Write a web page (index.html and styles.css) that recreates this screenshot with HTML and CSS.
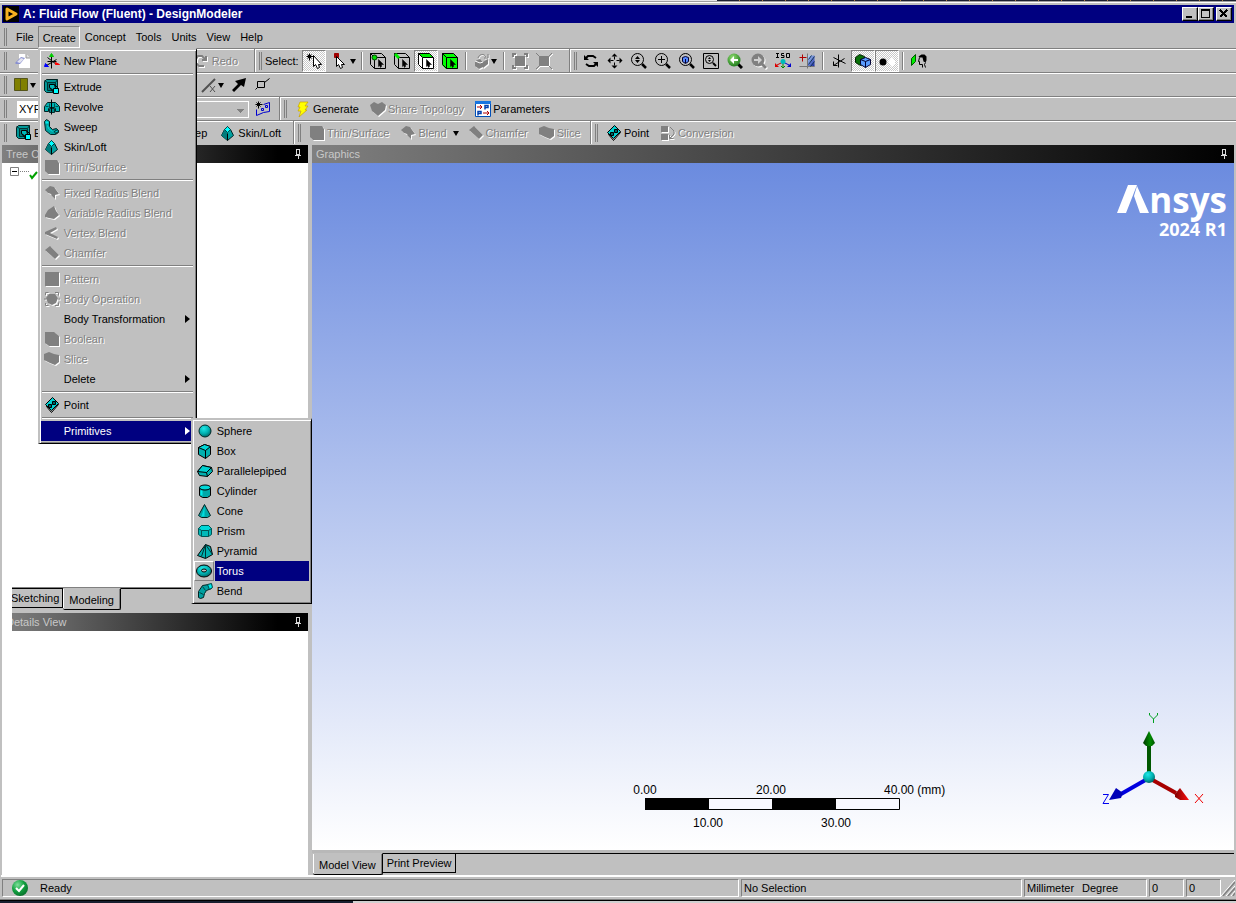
FILE: index.html
```html
<!DOCTYPE html>
<html lang="en">
<head>
<meta charset="utf-8">
<title>A: Fluid Flow (Fluent) - DesignModeler</title>
<link rel="stylesheet" href="styles.css">
</head>
<body>
<svg class="defs" aria-hidden="true">
  <defs>
    <linearGradient id="sky" x1="0" y1="0" x2="1" y2="1"><stop offset="0" stop-color="#bfe0ff"/><stop offset="1" stop-color="#1020a0"/></linearGradient>
    <radialGradient id="ball" cx=".4" cy=".3" r=".7"><stop offset="0" stop-color="#20e8e8"/><stop offset=".6" stop-color="#00b0b0"/><stop offset="1" stop-color="#006868"/></radialGradient>
    <radialGradient id="ok" cx=".35" cy=".3" r=".8"><stop offset="0" stop-color="#7fe09a"/><stop offset=".5" stop-color="#12a040"/><stop offset="1" stop-color="#066a28"/></radialGradient>
    <radialGradient id="leaf" cx=".4" cy=".3" r=".8"><stop offset="0" stop-color="#8fdc70"/><stop offset="1" stop-color="#107010"/></radialGradient>
  </defs>
  <symbol id="plane" viewBox="-.5 -.5 16 16"><path d="M7 2v13M3 4l9 7M2 12l10-6M3 8h9" stroke="#000" fill="none"/><path d="M7 0L5 3h4z" fill="#0c0" stroke="#0c0"/><path d="M0 13l1-3 3 3z" fill="#00f" stroke="#00f"/><path d="M15 11l-4-2v2z" fill="#f00" stroke="#f00"/></symbol>
  <symbol id="extrude" viewBox="-.5 -.5 16 16"><path d="M0 2l2-2h11v10l-2 3H2l-2-2z" fill="#009898" stroke="#022"/><path d="M3 3h8v8H3zM3 3L0 1M11 3l2-3" fill="#007878" stroke="#033"/><path d="M5 5h5l1 4-2 2-4-3z" fill="#00b8b8" stroke="#000"/><path d="M5 8l5 6M10 5l4 4" stroke="#000"/><path d="M9 9h5v5H9z" fill="#0ff" stroke="#000"/></symbol>
  <symbol id="revolve" viewBox="-.5 -.5 16 16"><path d="M0 7l3-4h8l4 4v5h-4V9l-1-1H5L4 9v3H0z" fill="#00b0b0" stroke="#022"/><path d="M1 7h3M11 7h3M5 4v4M10 4v4" stroke="#055" fill="none"/><path d="M5 9h5v4H5z" fill="#088" stroke="#033"/><path d="M7 0v15" stroke="#000"/></symbol>
  <symbol id="sweep" viewBox="-.5 -.5 16 16"><path d="M0 2l2-2 3 2v5l3 3 4-1 2 2v2l-3 2H6l-5-4z" fill="#00a0a0" stroke="#022"/><path d="M1 2h3v2H1z" fill="#0ee"/><path d="M10 12l3-2 1 2-3 2z" fill="#0cc" stroke="#022"/><path d="M3 6l1 3 4 3" stroke="#0dd" fill="none"/></symbol>
  <symbol id="loft" viewBox="-.5 -.5 16 16"><path d="M7 1l3 3 3 6-6 5-6-5 3-6z" fill="#00a0a0" stroke="#022"/><path d="M1 10l3-6 3 4v7z" fill="#007c7c"/><path d="M7 1l3 3-3 3-3-3z" fill="#0ff" stroke="#044"/><path d="M7 8v7" stroke="#000"/></symbol>
  <symbol id="g-surface" viewBox="0 0 16 16"><path d="M1 1h12l2 3v11H4l-3-3z"/></symbol>
  <symbol id="g-blend" viewBox="0 0 16 16"><path d="M1 5l5-4 4 1 5 7-4 1v4l-3-3-1-2-3-1z"/></symbol>
  <symbol id="g-var" viewBox="0 0 16 16"><path d="M1 10l3-5 6-4 2 5 3 4-5 4-5-1-4-1z"/></symbol>
  <symbol id="g-vertex" viewBox="0 0 16 16"><path d="M1 7l11-5 1 2-7 4 8 4-1 2L1 9z"/></symbol>
  <symbol id="g-chamfer" viewBox="0 0 16 16"><path d="M1 5l5-4 9 9-4 4z"/></symbol>
  <symbol id="g-pattern" viewBox="0 0 16 16"><path d="M1 1h14v14H1z"/></symbol>
  <symbol id="g-body" viewBox="0 0 16 16"><path d="M5 3h6l3 4-2 5-4 2-4-2-2-5z"/><path d="M1.500 4V1.500h3M11 1.500h3.500v3M1.500 12v2.500h3M11 14.500h3.500v-3M0 8h2M14 8h2" fill="none" stroke="#808080"/></symbol>
  <symbol id="g-bool" viewBox="0 0 16 16"><path d="M1 1h9l5 4v10H5l-4-3z"/></symbol>
  <symbol id="g-slice" viewBox="0 0 16 16"><path d="M0 3l5-2 5 2 5 1v7l-4 3-5-2-6-3z"/></symbol>
  <symbol id="g-share" viewBox="0 0 16 16"><path d="M0 4l4-3 4 2 4-2 4 3-1 5-7 6-6-5z"/></symbol>
  <symbol id="g-conv" viewBox="0 0 16 16"><path d="M1 1h7v6H1zM1 9h7v6H1z"/><path d="M10 2l4 4v3l-4 4M9.500 10v3.500h4" stroke="#808080" fill="none"/></symbol>
  <symbol id="point" viewBox="-.5 -.5 16 16"><path d="M2 9l7-7 5 5-7 8z" fill="#c0c0c0" stroke="#000"/><path d="M1 7l7-7 6 6-7 7z" fill="#00d0d0" stroke="#000"/><path d="M4 7h3v3H4zM8 4h3v3H8z" fill="#066" stroke="#000"/></symbol>
  <symbol id="sphere" viewBox="0 0 16 16"><circle cx="8" cy="8" r="6" fill="url(#ball)" stroke="#002828"/></symbol>
  <symbol id="box" viewBox="-.5 -.5 16 16"><path d="M1 4l6-3 6 2v8l-5 4-7-4z" fill="#00b0b0" stroke="#000"/><path d="M1 4l6-3 6 2-5 4z" fill="#00d8d8" stroke="#000"/><path d="M8 7v8" stroke="#000"/></symbol>
  <symbol id="para" viewBox="-.5 -.5 16 16"><path d="M0 8l5-6 9 2 1 4-5 5-8-1z" fill="#00b0b0" stroke="#000"/><path d="M0 8l5-6 9 2-5 5z" fill="#00d0d0" stroke="#000"/><path d="M9 9l1 4" stroke="#000"/></symbol>
  <symbol id="cyl" viewBox="-.5 -.5 16 16"><path d="M2 4v8l3 2h5l3-2V4z" fill="#00a8a8" stroke="#000"/><path d="M4 7v5" stroke="#0ee" stroke-width="2"/><ellipse cx="7.500" cy="4" rx="5.500" ry="2.500" fill="#00d8d8" stroke="#000"/></symbol>
  <symbol id="cone" viewBox="-.5 -.5 16 16"><path d="M7 1l6 11-3 2H4l-3-2z" fill="#00a8a8" stroke="#022"/><path d="M7 3L4 13h3z" fill="#0dd"/></symbol>
  <symbol id="prism" viewBox="-.5 -.5 16 16"><path d="M1 5l3-3h7l3 3v6l-3 2H4l-3-2z" fill="#00b8b8" stroke="#055"/><path d="M1 5l3-3h7l3 3-3 2H4z" fill="#00d8d8" stroke="#055"/><path d="M4 7v6M11 7v6" stroke="#055"/></symbol>
  <symbol id="pyr" viewBox="-.5 -.5 16 16"><path d="M8 1l5 2 2 8-7 4-8-3z" fill="#00b0b0" stroke="#000"/><path d="M8 1v14M8 1l7 10M8 1L4 13" stroke="#033" fill="none"/></symbol>
  <symbol id="torus" viewBox="0 0 16 16"><ellipse cx="8" cy="8" rx="7.500" ry="6" fill="url(#ball)" stroke="#000"/><ellipse cx="8" cy="7.500" rx="2.500" ry="1.500" fill="#c0c0c0" stroke="#000"/></symbol>
  <symbol id="bend" viewBox="-.5 -.5 16 16"><path d="M1 14l0-6 4-6 6-1 3 0v4l-5 2-2 3-1 4-3 1z" fill="#00a0a0" stroke="#022"/><path d="M10 1l4-1 1 4-3 2z" fill="#0ee" stroke="#044"/><path d="M5 3l3 4M2 9l4 2" stroke="#044"/></symbol>
  <symbol id="sheet" viewBox="0 0 16 16"><path d="M4 1h7l4 4v10H4z" fill="#fff"/><path d="M11 1v4h4" fill="#ddd" stroke="#999"/><path d="M0 10l6-6 4 1-5 6H1z" fill="#8890d0"/><path d="M2 9l4-4 3 1-4 4z" fill="#e4e4f0"/></symbol>
  <symbol id="redo" viewBox="0 0 16 16"><path d="M12 3v4H8M12 7L8 3H4L2 6v4l3 3h5" fill="none" stroke="#808080" stroke-width="2"/></symbol>
  <symbol id="selnew" viewBox="-.5 -.5 16 16"><path d="M3 0v7M0 3h7M1 1l4 4M5 1L1 5" stroke="#000"/><path d="M7 2v11l2-2 2 4 2-1-1-3h3z" fill="#fff" stroke="#000"/></symbol>
  <symbol id="selmode" viewBox="-.5 -.5 16 16"><path d="M0 0h4v4H0z" fill="#a00000" stroke="#a00000"/><path d="M2 3v10l2-2 2 4 2-1-1-3h3z" fill="#fff" stroke="#000"/></symbol>
  <symbol id="cube" viewBox="-.5 -.5 16 16"><path d="M0 0h11l4 4v11H4l-4-4zM4 4h11M4 4v11M4 4L0 0" fill="none" stroke="#000"/><path d="M8 6v7l1-1 1 2 1-1v-2h2z" fill="#000" stroke="#000" stroke-width=".5"/></symbol>
  <symbol id="c-pt" viewBox="0 0 16 16"><use href="#cube"/><circle cx="4.500" cy="4.500" r="2.500" fill="#0d0" stroke="#040"/></symbol>
  <symbol id="c-edge" viewBox="0 0 16 16"><use href="#cube"/><path d="M1 1l4 4" stroke="#0e0" stroke-width="3"/></symbol>
  <symbol id="c-face" viewBox="0 0 16 16"><path d="M0 0h11l5 5v11H4l-4-4z" fill="#fff"/><path d="M0 0h11l4 4H4z" fill="#0e0"/><use href="#cube"/></symbol>
  <symbol id="c-body" viewBox="0 0 16 16"><path d="M0 0h11l5 5v11H4l-4-4z" fill="#0f0"/><use href="#cube"/></symbol>
  <symbol id="g-ext" viewBox="0 0 16 16"><path d="M1 8l5-2 3 3v5l-4 2-4-3zM9 9l5-3v5l-5 4z"/><path d="M4 5c1-4 6-5 8-1M14 1v4h-4" stroke="#808080" fill="none"/><path d="M1 8l5 2 3-1" stroke="#fff" fill="none"/></symbol>
  <symbol id="g-exp" viewBox="0 0 16 16"><path d="M3 3h10v10H3z"/><path d="M1 4V1h3M12 1h3v3M1 12v3h3M12 15h3v-3" fill="none" stroke="#808080" stroke-width="2"/></symbol>
  <symbol id="g-shr" viewBox="0 0 16 16"><path d="M3 3h10v10H3z"/><path d="M0 0l4 4M16 0l-4 4M0 16l4-4M16 16l-4-4" stroke="#808080"/></symbol>
  <symbol id="rotate" viewBox="0 0 16 16"><path d="M3 5l2-2h5l3 2M13 11l-2 2H6l-3-2" stroke="#000" stroke-width="2" fill="none"/><path d="M1 2v5h5zM15 14V9h-5z"/></symbol>
  <symbol id="pan" viewBox="-.5 -.5 16 16"><path d="M7 0L4 3h6zM7 15l-3-3h6zM0 7l3-3v6zM15 7l-3-3v6z"/><path d="M7 3v3M7 9v3M3 7h3M9 7h3" stroke="#000"/></symbol>
  <symbol id="lens" viewBox="0 0 16 16"><circle cx="6.500" cy="6.500" r="6" fill="none" stroke="#000"/><path d="M11 11l4 4" stroke="#000" stroke-width="2.500"/></symbol>
  <symbol id="z-ud" viewBox="0 0 16 16"><use href="#lens"/><path d="M6.500 3L4 6h5zM6.500 10L4 7h5z"/></symbol>
  <symbol id="z-in" viewBox="0 0 16 16"><use href="#lens"/><path d="M6.500 3v7M3 6.500h7" stroke="#000"/></symbol>
  <symbol id="z-fit" viewBox="0 0 16 16"><use href="#lens"/><path d="M3.500 4.500l3-1 3 1v4l-3 2-3-2z" fill="#58f" stroke="#003"/><path d="M6.500 6v4" stroke="#003" fill="none"/></symbol>
  <symbol id="z-box" viewBox="0 0 16 16"><path d="M.5.5h15v15H.5z" fill="none" stroke="#000"/><circle cx="6.500" cy="6.500" r="4" fill="none" stroke="#000"/><path d="M10 10l3 3" stroke="#000" stroke-width="2"/><path d="M6.500 4L5 6h3zM6.500 9L5 7h3z"/></symbol>
  <symbol id="z-prev" viewBox="0 0 16 16"><path d="M11 11l4 4" stroke="#000" stroke-width="3"/><circle cx="7" cy="7" r="6.500" fill="url(#leaf)"/><path d="M3 7l4-4v3h4v2H7v3z" fill="#fff"/></symbol>
  <symbol id="z-next" viewBox="0 0 16 16"><path d="M11 11l4 4" stroke="#808080" stroke-width="3"/><circle cx="7" cy="7" r="6.500" fill="#808080"/><path d="M11 7L7 3v3H3v2h4v3z" fill="#d0d0d0"/></symbol>
  <symbol id="iso" viewBox="0 0 16 16"><path d="M1 .5h3M2.500.5v4M1 4.500h3M9 .5H6.500v2H9v2H6M11.500.5h3v4h-3z" stroke="#000" fill="none"/><path d="M8 10v5M6 13l2 2 2-2" stroke="#080" fill="none"/><path d="M8 9l-6 3" stroke="#c00"/><path d="M0 10v4h4z" fill="#d00"/><path d="M8 9l6 3" stroke="#00c"/><path d="M16 10v4h-4z" fill="#00c"/><circle cx="8" cy="8.500" r="2.500" fill="#0bb"/></symbol>
  <symbol id="look" viewBox="-.5 -.5 16 16"><path d="M8 2h7v11H8z" fill="url(#sky)"/><path d="M8 0v15M0 13h15" stroke="#777"/><path d="M3 1v7M0 4h7" stroke="#b00000"/><path d="M9 6l3-4M9 11l6-8M11 13l4-5" stroke="#135"/></symbol>
  <symbol id="axes" viewBox="-.5 -.5 16 16"><path d="M7 1v13M2 4l12 6M2 12l11-7M2 8v4h4" stroke="#000" fill="none"/></symbol>
  <symbol id="models" viewBox="-.5 -.5 16 16"><path d="M0 4l4-3 5 2v7l-4 2-5-3z" fill="#087008" stroke="#020"/><path d="M5 6l5-2 5 2v5l-5 3-5-3z" fill="#5a9cff" stroke="#003"/><path d="M5 6l5 2 5-2M10 8v6" stroke="#003" fill="none"/></symbol>
  <symbol id="dots" viewBox="0 0 16 16"><circle cx="4" cy="9" r="3.500"/><path d="M13 4l4 5-4 5-4-5z" fill="#fff"/></symbol>
  <symbol id="head" viewBox="-.5 -.5 16 16"><path d="M0 5l4-4v7l-4 4z" fill="#0e0" stroke="#050"/><path d="M7 3l3-2h3l2 2v4l-1 2-2-1-1-4-3 0z"/><path d="M8 4l-1 4h1v3h3v3M14 9l-1 2 1 3" stroke="#000" fill="none"/></symbol>
  <symbol id="swatch" viewBox="-.5 -.5 16 16"><path d="M1 1h13v12H1zM7 1v12" fill="#808000" stroke="#55551a"/></symbol>
  <symbol id="slash" viewBox="0 0 16 16"><path d="M1 15L14 2" stroke="#505050" stroke-width="2"/><path d="M9 9l5 6M14 9l-5 6" stroke="#505050"/></symbol>
  <symbol id="arrowne" viewBox="0 0 16 16"><path d="M15 1l-2 9-3-2-7 7-2-2 6-6-3-3z"/></symbol>
  <symbol id="sq" viewBox="-.5 -.5 16 16"><path d="M2 4h7v6H2zM9 5l5-4M0 12l2-2" fill="none" stroke="#000"/></symbol>
  <symbol id="sketch" viewBox="-.5 -.5 16 16"><path d="M3 0v7M0 3h7M1 1l4 4M5 1L1 5" stroke="#000"/><path d="M8 3l6-2v9l-6 1-7 3V8M6 7h2v2H6zM10 4h2v2h-2z" fill="none" stroke="#0000d0"/></symbol>
  <symbol id="bolt" viewBox="0 0 16 16"><path d="M5 1h8l-3 4h3l-3 4h2l-8 7 2-6H3l2-4H3z" fill="#ff0" stroke="#c8a000" stroke-width=".7"/></symbol>
  <symbol id="params" viewBox="0 0 16 16"><path d="M.5.5h15v15H.5z" fill="#fff" stroke="#0050b8"/><path d="M0 0h16v3H0z" fill="#1874e0"/><path d="M10 8.500V4.500h3v2h-3M3 14.500v-4h3v2H3" fill="none" stroke="#0040b0" stroke-width="1.500"/><path d="M2 6h5M5 4l2 2-2 2M8 12h6M12 10l2 2-2 2" fill="none" stroke="#b00000"/></symbol>
  <symbol id="pin" viewBox="0 0 6 10"><path d="M1.500.5h3v5h-3zM0 6.500h6M3 6.500V10" fill="none" stroke="#d8d8d8"/></symbol>
</svg>

<div class="window">
  <div class="edge-top"></div>
  <header class="title">
    <svg class="app" viewBox="0 0 16 16" aria-hidden="true"><path d="M0 0h16v16H0z"/><path d="M4 3l9 5-9 5z" fill="none" stroke="#f5b020" stroke-width="3" stroke-linejoin="round"/></svg>
    <h1>A: Fluid Flow (Fluent) - DesignModeler</h1>
    <button class="wb" aria-label="Minimize"><svg viewBox="0 0 12 10"><path d="M3 7h6v2H3z"/></svg></button>
    <button class="wb" aria-label="Maximize"><svg viewBox="0 0 12 10"><path d="M2 0h9v9H2zM3 2v6h7V2z" fill-rule="evenodd"/></svg></button>
    <button class="wb close" aria-label="Close"><svg viewBox="0 0 12 10"><path d="M3 1l7 7M10 1L3 8" stroke="#000" stroke-width="2"/></svg></button>
  </header>

  <nav class="menubar">
    <span class="grip"></span>
    <button>File</button>
    <div class="menu-host">
      <button class="open" aria-expanded="true">Create</button>
      <div class="popup" role="menu">
        <button role="menuitem"><svg><use href="#plane"/></svg>New Plane</button>
        <hr>
        <button role="menuitem"><svg><use href="#extrude"/></svg>Extrude</button>
        <button role="menuitem"><svg><use href="#revolve"/></svg>Revolve</button>
        <button role="menuitem"><svg><use href="#sweep"/></svg>Sweep</button>
        <button role="menuitem"><svg><use href="#loft"/></svg>Skin/Loft</button>
        <button role="menuitem" disabled><svg><use href="#g-surface"/></svg>Thin/Surface</button>
        <hr>
        <button role="menuitem" disabled><svg><use href="#g-blend"/></svg>Fixed Radius Blend</button>
        <button role="menuitem" disabled><svg><use href="#g-var"/></svg>Variable Radius Blend</button>
        <button role="menuitem" disabled><svg><use href="#g-vertex"/></svg>Vertex Blend</button>
        <button role="menuitem" disabled><svg><use href="#g-chamfer"/></svg>Chamfer</button>
        <hr>
        <button role="menuitem" disabled><svg><use href="#g-pattern"/></svg>Pattern</button>
        <button role="menuitem" disabled><svg><use href="#g-body"/></svg>Body Operation</button>
        <button role="menuitem" class="more"><svg></svg>Body Transformation</button>
        <button role="menuitem" disabled><svg><use href="#g-bool"/></svg>Boolean</button>
        <button role="menuitem" disabled><svg><use href="#g-slice"/></svg>Slice</button>
        <button role="menuitem" class="more"><svg></svg>Delete</button>
        <hr>
        <button role="menuitem"><svg><use href="#point"/></svg>Point</button>
        <hr>
        <div class="menu-host">
          <button role="menuitem" class="more hot"><svg></svg>Primitives</button>
          <div class="popup sub" role="menu">
            <button role="menuitem"><svg><use href="#sphere"/></svg>Sphere</button>
            <button role="menuitem"><svg><use href="#box"/></svg>Box</button>
            <button role="menuitem"><svg><use href="#para"/></svg>Parallelepiped</button>
            <button role="menuitem"><svg><use href="#cyl"/></svg>Cylinder</button>
            <button role="menuitem"><svg><use href="#cone"/></svg>Cone</button>
            <button role="menuitem"><svg><use href="#prism"/></svg>Prism</button>
            <button role="menuitem"><svg><use href="#pyr"/></svg>Pyramid</button>
            <button role="menuitem" class="picked"><svg><use href="#torus"/></svg><span>Torus</span></button>
            <button role="menuitem"><svg><use href="#bend"/></svg>Bend</button>
          </div>
        </div>
      </div>
    </div>
    <button>Concept</button>
    <button>Tools</button>
    <button>Units</button>
    <button>View</button>
    <button>Help</button>
  </nav>

  <div class="row">
    <div class="band file-band"><span class="grip"></span>
      <button class="ib" aria-label="New sheet"><svg><use href="#sheet"/></svg></button>
      <button class="tb" disabled><svg><use href="#redo"/></svg>Redo</button>
    </div>
    <div class="band select-band"><span class="grip"></span>
      <span class="lbl">Select:</span>
      <button class="ib on" aria-label="New selection"><svg><use href="#selnew"/></svg></button>
      <button class="ib drop mode" aria-label="Select mode"><svg><use href="#selmode"/></svg></button>
      <i class="sep"></i>
      <button class="ib" aria-label="Points"><svg><use href="#c-pt"/></svg></button>
      <button class="ib" aria-label="Edges"><svg><use href="#c-edge"/></svg></button>
      <button class="ib on" aria-label="Faces"><svg><use href="#c-face"/></svg></button>
      <button class="ib" aria-label="Bodies"><svg><use href="#c-body"/></svg></button>
      <i class="sep"></i>
      <button class="ib drop off" aria-label="Extend"><svg><use href="#g-ext"/></svg></button>
      <i class="sep"></i>
      <button class="ib" aria-label="Expand" disabled><svg><use href="#g-exp"/></svg></button>
      <button class="ib" aria-label="Shrink" disabled><svg><use href="#g-shr"/></svg></button>
    </div>
    <div class="band last"><span class="grip"></span>
      <button class="ib" aria-label="Rotate"><svg><use href="#rotate"/></svg></button>
      <button class="ib" aria-label="Pan"><svg><use href="#pan"/></svg></button>
      <button class="ib" aria-label="Zoom"><svg><use href="#z-ud"/></svg></button>
      <button class="ib" aria-label="Zoom in"><svg><use href="#z-in"/></svg></button>
      <button class="ib" aria-label="Zoom to fit"><svg><use href="#z-fit"/></svg></button>
      <button class="ib" aria-label="Magnifier"><svg><use href="#z-box"/></svg></button>
      <button class="ib" aria-label="Previous view"><svg><use href="#z-prev"/></svg></button>
      <button class="ib" aria-label="Next view" disabled><svg><use href="#z-next"/></svg></button>
      <button class="ib" aria-label="Isometric"><svg><use href="#iso"/></svg></button>
      <button class="ib" aria-label="Look at plane"><svg><use href="#look"/></svg></button>
      <i class="sep"></i>
      <button class="ib" aria-label="Display plane"><svg><use href="#axes"/></svg></button>
      <button class="ib on" aria-label="Display model"><svg><use href="#models"/></svg></button>
      <button class="ib on" aria-label="Display points"><svg><use href="#dots"/></svg></button>
      <i class="sep"></i>
      <button class="ib" aria-label="Look at"><svg><use href="#head"/></svg></button>
    </div>
  </div>

  <div class="row">
    <div class="band last"><span class="grip"></span>
      <button class="ib drop" aria-label="Face color"><svg><use href="#swatch"/></svg></button>
      <div class="tools">
        <button class="ib drop" aria-label="Edge style"><svg><use href="#slash"/></svg></button>
        <button class="ib" aria-label="Edge direction"><svg><use href="#arrowne"/></svg></button>
        <button class="ib" aria-label="Vertices"><svg><use href="#sq"/></svg></button>
      </div>
    </div>
  </div>

  <div class="row">
    <div class="band plane-band"><span class="grip"></span>
      <select aria-label="Plane"><option>XYPlane</option></select>
      <select aria-label="Sketch" class="none" disabled><option>None</option></select>
      <button class="ib" aria-label="New sketch"><svg><use href="#sketch"/></svg></button>
    </div>
    <div class="band last"><span class="grip"></span>
      <button class="tb"><svg><use href="#bolt"/></svg>Generate</button>
      <button class="tb" disabled><svg><use href="#g-share"/></svg>Share Topology</button>
      <button class="tb"><svg><use href="#params"/></svg>Parameters</button>
    </div>
  </div>

  <div class="row">
    <div class="band make-band"><span class="grip"></span>
      <button class="tb"><svg><use href="#extrude"/></svg>Extrude</button>
      <button class="tb"><svg><use href="#revolve"/></svg>Revolve</button>
      <button class="tb"><svg><use href="#sweep"/></svg>Sweep</button>
      <button class="tb"><svg><use href="#loft"/></svg>Skin/Loft</button>
    </div>
    <div class="band edit-band"><span class="grip"></span>
      <button class="tb" disabled><svg><use href="#g-surface"/></svg>Thin/Surface</button>
      <button class="tb drop off"><svg><use href="#g-blend"/></svg>Blend</button>
      <button class="tb" disabled><svg><use href="#g-chamfer"/></svg>Chamfer</button>
      <button class="tb" disabled><svg><use href="#g-slice"/></svg>Slice</button>
    </div>
    <div class="band last"><span class="grip"></span>
      <button class="tb"><svg><use href="#point"/></svg>Point</button>
      <button class="tb" disabled><svg><use href="#g-conv"/></svg>Conversion</button>
    </div>
  </div>

  <main>
    <aside>
      <section class="tree">
        <h2>Tree Outline<svg class="pin"><use href="#pin"/></svg></h2>
        <div class="node" role="treeitem" aria-label="A: Fluid Flow (Fluent)">
          <svg class="toggle" viewBox="0 0 28 14" aria-hidden="true"><path d="M.5 1.500h8v8h-8z" fill="#fff" stroke="#808080"/><path d="M2 5.500h5" stroke="#000"/><path d="M10 5.500h9" stroke="#808080" stroke-dasharray="1 1"/><path d="M20 9l2 3 5-6" stroke="#00a000" stroke-width="2" fill="none"/></svg>
          <i class="part"></i>
        </div>
      </section>
      <section class="details">
        <div class="tabs"><button>Sketching</button><button class="active">Modeling</button><span class="rest"></span></div>
        <h2>Details View<svg class="pin"><use href="#pin"/></svg></h2>
      </section>
    </aside>
    <section class="graphics">
      <h2>Graphics<svg class="pin"><use href="#pin"/></svg></h2>
      <div class="canvas">
        <div class="brand">
          <div class="word"><svg viewBox="0 0 32 28" aria-label="A"><path d="M0 28L11 0h9L9 28zM20 1l12 27h-9l-6-17z" fill="#fff"/></svg><span>nsys</span></div>
          <div class="ver">2024 R1</div>
        </div>
        <svg class="scale" viewBox="0 0 360 52">
          <path d="M52.500 18.500h254v11h-254z" fill="#f8f8ff" stroke="#000"/><path d="M52 18h64v12H52zM179 18h64v12h-64z"/>
          <g text-anchor="middle"><text x="52" y="14">0.00</text><text x="178" y="14">20.00</text><text x="115" y="47">10.00</text><text x="243" y="47">30.00</text></g>
          <text x="291" y="14">40.00 (mm)</text>
        </svg>
        <svg class="triad" viewBox="0 0 110 100">
          <defs>
            <linearGradient id="gx"><stop offset="0" stop-color="#800000"/><stop offset="1" stop-color="#ff1010"/></linearGradient>
            <linearGradient id="gy"><stop offset="0" stop-color="#003800"/><stop offset=".6" stop-color="#008c00"/><stop offset="1" stop-color="#005000"/></linearGradient>
          </defs>
          <path d="M50 67V30" stroke="#005800" stroke-width="4"/><path d="M50 20l6 12-3 3h-6l-3-3z" fill="url(#gy)"/>
          <path d="M50 67l27 15" stroke="#a80000" stroke-width="4"/><path d="M81 77l9 12h-9l-5-3v-3z" fill="url(#gx)"/>
          <path d="M50 67L22 83" stroke="#0000e0" stroke-width="4"/><path d="M17 77l7 5-2 5-12 2z" fill="#0000b8"/>
          <circle cx="50" cy="66" r="6" fill="url(#ball)"/>
          <path d="M50.500 2v2l4 4 4-4V2M54.500 8v4" fill="none" stroke="#00a020"/>
          <path d="M96 83l8 9M104 83l-8 9" stroke="#f00000"/>
          <path d="M4 83.500h5.500l-5.500 9h6" fill="none" stroke="#0000f0"/>
        </svg>
      </div>
      <div class="tabs view-tabs"><button class="active">Model View</button><button>Print Preview</button><span class="rest"></span></div>
    </section>
  </main>

  <footer>
    <div class="cell ready"><svg viewBox="0 0 16 16" aria-hidden="true"><circle cx="8" cy="8" r="8" fill="url(#ok)"/><path d="M4 8l3 3 5-6" fill="none" stroke="#fff" stroke-width="2"/></svg>Ready</div>
    <div class="cell sel">No Selection</div>
    <div class="cell units"><span>Millimeter</span><span>Degree</span></div>
    <div class="cell num">0</div>
    <div class="cell num">0</div>
    <svg class="size" viewBox="0 0 14 17" aria-hidden="true"><path d="M0 17L14 1M5 17l9-10M10 17l4-5" stroke="#fff"/><path d="M2 17L14 3M7 17l7-8M12 17l2-3" stroke="#808080" stroke-width="1.500"/></svg>
  </footer>
  <div class="edge-bottom"></div>
</div>
</body>
</html>
```
FILE: styles.css
```css
* { box-sizing: border-box; }
body { margin: 0; background: #c0c0c0; color: #000; font: 11px/14px "Liberation Sans", Arial, sans-serif; }
h1, h2 { margin: 0; font-size: 11px; font-weight: 400; }
button, select { font: inherit; color: inherit; margin: 0; padding: 0; border: 0; background: none; }
svg { display: block; flex: none; }
.defs { position: absolute; width: 0; height: 0; }

.window { display: flex; flex-direction: column; height: 100vh; overflow: hidden; }
.edge-top { height: 5px; flex: none; background: linear-gradient(#e8e8e8 0 1px, #a0a0a0 1px 2px, #fff 2px 3px, #c0c0c0 3px); }
.edge-top::after { content: ""; display: block; height: 1px; margin-left: 58%; background: repeating-linear-gradient(90deg, #1c2030 0 22px, #b08040 22px 23px); }
.edge-bottom { height: 6px; flex: none; border-top: 2px solid #c0c0c0; background: linear-gradient(90deg, #182030 0 353px, #d0d0d0 353px) bottom / 100% 2px no-repeat, linear-gradient(#808080 0 1px, #000 1px); }

/* title bar */
.title { display: flex; align-items: center; flex: none; height: 18px; margin: 0 2px; padding: 0 2px 0 1px; background: #000080; color: #fff; }
.title h1 { flex: 1; padding-left: 4px; font-size: 12px; font-weight: 700; }
.app { width: 16px; height: 16px; }
.wb { width: 16px; height: 14px; background: #c0c0c0; border: 1px solid; border-color: #fff #000 #000 #fff; box-shadow: inset -1px -1px #808080; }
.wb svg { width: 12px; height: 10px; shape-rendering: crispEdges; }
.close { margin-left: 2px; }

/* menus */
.menubar { display: flex; align-items: flex-end; flex: none; height: 25px; padding-left: 4px; }
.menubar > .grip { margin-bottom: 2px; }
.menubar > button { height: 22px; padding: 0 5px; }
.menubar > .grip + button { padding-right: 4px; margin-left: 2px; }
.menu-host { position: relative; }
.menu-host > .open { height: 22px; padding: 1px 3px 0 4px; border: 1px solid; border-color: #808080 #fff #fff #808080; }
.popup { position: absolute; z-index: 5; top: 100%; left: 0; width: 159px; padding: 1px 2px 2px 1px; background: #c0c0c0; border: solid; border-width: 2px 1px 1px 2px; border-color: #c0c0c0 #000 #000 #c0c0c0; box-shadow: inset 1px 1px #fff, inset -1px -1px #808080; }
.popup button { display: flex; align-items: center; gap: 4px; width: 100%; height: 20px; padding-left: 3px; text-align: left; white-space: nowrap; }
.popup svg { width: 16px; height: 16px; }
.popup hr { height: 2px; margin: 2px 1px; border: 0; background: linear-gradient(#808080 50%, #fff 50%); }
.sub { top: -3px; left: calc(100% - 3px); width: 121px; z-index: 6; }
.more::after { content: ""; margin: 0 4px 0 auto; border: 4px solid transparent; border-left: 5px solid; border-right: 0; }
.hot { background: #000080; color: #fff; }
.popup .picked { gap: 1px; padding: 0; }
.picked svg { width: 20px; height: 20px; padding: 1px; border: 1px solid; border-color: #fff #808080 #808080 #fff; }
.picked span { flex: 1; height: 20px; padding-left: 2px; line-height: 20px; background: #000080; color: #fff; }

/* toolbars */
.row { display: flex; flex: none; height: 24px; border-top: 1px solid #808080; box-shadow: inset 0 1px #fff; }
.band { display: flex; align-items: center; padding: 1px 0 0 4px; border-right: 1px solid #808080; box-shadow: 1px 0 #fff; }
.last { flex: 1; border: 0; box-shadow: none; }
.grip { flex: none; width: 3px; height: 18px; margin-right: 2px; border: solid; border-width: 0 1px; border-color: #fff #808080; }
.ib { display: flex; align-items: center; justify-content: center; flex: none; width: 24px; height: 22px; }
.ib svg, .tb svg { width: 16px; height: 16px; }
.on { border: 1px solid; border-color: #808080 #fff #fff #808080; background: repeating-conic-gradient(#fff 0 25%, #c8c8c8 0 50%) 0 0 / 2px 2px; }
.tb { display: flex; align-items: center; gap: 2px; height: 22px; padding: 0 5px 0 6px; white-space: nowrap; }
.drop::after { content: ""; border: 3px solid transparent; border-top: 5px solid #000; border-bottom: 0; }
.ib.drop { width: 30px; gap: 1px; }
.ib.mode { width: 32px; padding-left: 6px; gap: 0; }
.tb.drop { padding-right: 3px; }
.tb.drop::after { margin-left: 4px; }
.sep { flex: none; width: 2px; height: 18px; margin: 0 3px; background: linear-gradient(90deg, #808080 50%, #fff 50%); }
button:disabled, .tb.off { color: #808080; text-shadow: 1px 1px #fff; }
button:disabled svg, .off svg { fill: #808080; filter: drop-shadow(1px 1px 0 #fff); }
.file-band { width: 255px; justify-content: space-between; }
.file-band .ib { margin-right: auto; margin-left: 2px; }
.file-band .tb { padding-right: 16px; }
.select-band { width: 315px; }
.lbl { width: 38px; padding-left: 1px; }
.tools { display: flex; margin-left: 158px; }
.plane-band { width: 280px; }
.plane-band .grip { margin-right: 10px; }
select { width: 118px; height: 17px; padding: 0 2px; appearance: none; background: #fff; }
.none { width: 108px; margin: 0 2px 0 6px; background: linear-gradient(#808080, #808080) 95px 7px / 7px 1px no-repeat, linear-gradient(#808080, #808080) 96px 8px / 5px 1px no-repeat, linear-gradient(#808080, #808080) 97px 9px / 3px 1px no-repeat, linear-gradient(#808080, #808080) 98px 10px / 1px 1px no-repeat, #c0c0c0; border: 1px solid #fff; opacity: 1; }
.make-band { width: 294px; }
.make-band .grip { margin-right: 3px; }
.make-band .tb { padding-right: 7px; }
.edit-band { width: 297px; }
.row:has(+ main) { height: 25px; padding-bottom: 1px; }

/* panels */
main { display: flex; flex: 1; min-height: 0; margin: 0 2px; }
aside { display: flex; flex-direction: column; width: 306px; margin-right: 4px; background: #fff; }
h2 { display: flex; align-items: center; justify-content: space-between; height: 18px; padding: 0 7px 0 4px; background: linear-gradient(90deg, #808080, #000); color: #c8c8c8; line-height: 18px; }
aside h2 { background: linear-gradient(90deg, #808080, #000 90%); }
.pin { width: 6px; height: 10px; shape-rendering: crispEdges; }
.tree { flex: 442; }
.node { display: flex; padding: 3px 8px; }
.toggle { width: 28px; height: 14px; }
.part { width: 12px; height: 14px; background: #c8c800; }
.details { position: relative; flex: 288; background: #fff; }
.details::before { content: ""; position: absolute; z-index: 1; inset: 0 auto 0 0; width: 10px; background: #fff; }
.tabs { display: flex; align-items: flex-start; height: 26px; background: #c0c0c0; border-top: 1px solid #808080; }
.tabs button { height: 20px; padding: 0 3px; border: solid #000; border-width: 1px 1px 1px 0; white-space: nowrap; }
.tabs .active { height: 22px; padding: 2px 6px 0; border-top-color: #c0c0c0; border-radius: 0 0 2px 2px; box-shadow: inset 1px 0 #fff, inset -1px 0 #808080; }
.details .tabs button:first-child { padding-left: 9px; }
.tabs .rest { flex: 1; border-top: 1px solid #000; }
.graphics { display: flex; flex: 1; flex-direction: column; min-width: 0; }
.graphics h2 { flex: none; }
.canvas { position: relative; flex: 1; background: linear-gradient(#6b8bdf, #fff); }
.view-tabs { flex: none; height: 25px; padding-left: 1px; border-top: 3px solid #b8b8b8; }
.view-tabs button { padding: 0 4px; }
.brand { position: absolute; top: 22px; right: 7px; color: #fff; font-family: "Open Sans", sans-serif; font-weight: 700; text-align: right; }
.word { display: flex; align-items: flex-start; }
.word svg { width: 32px; height: 28px; }
.word span { height: 34px; font-size: 35px; line-height: 30px; }
.ver { font-size: 18px; line-height: 20px; }
.scale { position: absolute; bottom: 18px; left: calc(50% - 180px); width: 360px; height: 52px; font-size: 12px; }
.triad { position: absolute; right: 25px; bottom: 39px; width: 110px; height: 100px; }

/* status bar */
footer { display: flex; gap: 2px; flex: none; height: 22px; margin: 0 1px; padding: 2px 0 0 1px; border-top: 2px solid #fff; }
.cell { display: flex; align-items: center; padding-left: 2px; border: 1px solid; border-color: #808080 #fff #fff #808080; }
.ready { flex: 1; gap: 12px; padding-left: 9px; }
.ready svg { width: 16px; height: 16px; }
.sel { width: 281px; }
.units { width: 123px; gap: 8px; }
.num { width: 35px; }
.size { width: 14px; height: 17px; margin-left: -2px; }
```
